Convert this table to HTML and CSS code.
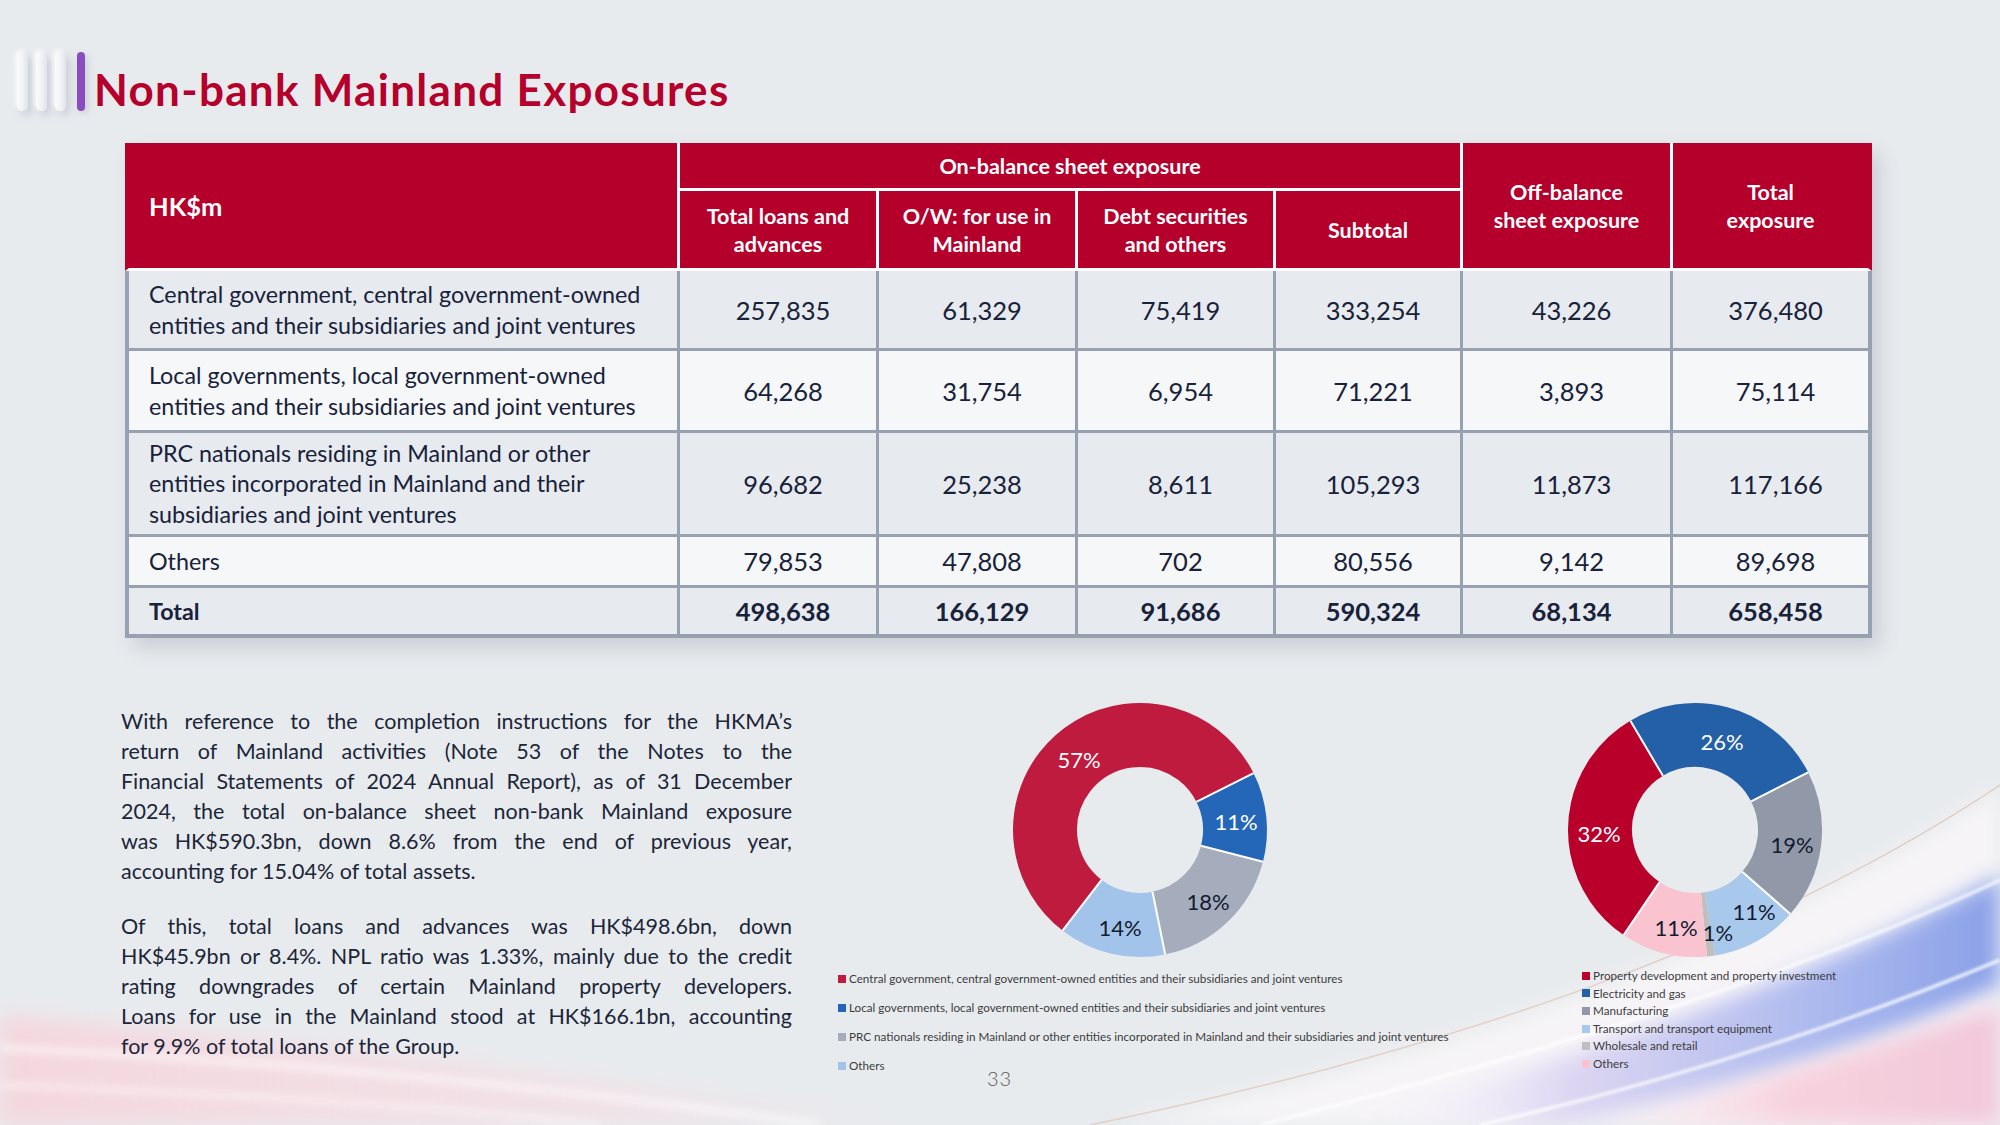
FILE: index.html
```html
<!DOCTYPE html>
<html lang="en">
<head>
<meta charset="utf-8">
<title>Non-bank Mainland Exposures</title>
<link rel="stylesheet" href="styles.css">
</head>
<body>
<div class="slide">
  <svg class="bg" viewBox="0 0 2000 1125" width="2000" height="1125" aria-hidden="true">
    <defs>
      <filter id="b10" x="-20%" y="-20%" width="140%" height="140%"><feGaussianBlur stdDeviation="10"/></filter>
      <filter id="b4" x="-20%" y="-20%" width="140%" height="140%"><feGaussianBlur stdDeviation="4"/></filter>
      <filter id="b2" x="-20%" y="-20%" width="140%" height="140%"><feGaussianBlur stdDeviation="1.5"/></filter>
      <linearGradient id="gBlue" x1="0" y1="0" x2="1" y2="0">
        <stop offset="0" stop-color="#ffffff" stop-opacity="0"/>
        <stop offset="0.35" stop-color="#dcd4f2"/>
        <stop offset="0.7" stop-color="#a9b6ee"/>
        <stop offset="1" stop-color="#7e98e6"/>
      </linearGradient>
      <linearGradient id="gPink" x1="0" y1="0" x2="1" y2="0">
        <stop offset="0" stop-color="#fbe3ea" stop-opacity="0"/>
        <stop offset="0.5" stop-color="#f7d2de"/>
        <stop offset="1" stop-color="#f1c8da"/>
      </linearGradient>
      <linearGradient id="gLeft" x1="0" y1="0" x2="1" y2="0">
        <stop offset="0" stop-color="#f6d4dc" stop-opacity="0.9"/>
        <stop offset="0.6" stop-color="#f6dbe2" stop-opacity="0.6"/>
        <stop offset="1" stop-color="#f6dbe2" stop-opacity="0"/>
      </linearGradient>
    </defs>
    <path d="M0,1015 C260,1035 560,1075 950,1125 L0,1125 Z" fill="url(#gLeft)" filter="url(#b10)"/>
    <path d="M0,1048 C300,1062 600,1092 820,1125" stroke="#ffffff" stroke-width="5" fill="none" opacity="0.8" filter="url(#b4)"/>
    <path d="M0,1085 C260,1095 480,1110 600,1125" stroke="#ffffff" stroke-width="4" fill="none" opacity="0.7" filter="url(#b4)"/>
    <path d="M1120,1125 C1450,1055 1760,950 2000,790 L2000,1125 Z" fill="#f6f4f7" filter="url(#b10)"/>
    <path d="M1330,1125 C1620,1050 1850,960 2000,875 L2000,985 C1860,1050 1690,1100 1560,1125 Z" fill="url(#gBlue)" opacity="0.9" filter="url(#b10)"/>
    <path d="M1580,1125 C1720,1095 1880,1045 2000,1005 L2000,1125 Z" fill="url(#gPink)" filter="url(#b10)"/>
    <path d="M1090,1125 C1450,1050 1760,945 2000,785" stroke="#e3cfc6" stroke-width="1.5" fill="none"/>
    <path d="M1260,1125 C1560,1050 1820,965 2000,880" stroke="#ffffff" stroke-width="3" fill="none" opacity="0.9" filter="url(#b2)"/>
    <path d="M1480,1125 C1700,1075 1880,1010 2000,960" stroke="#ffffff" stroke-width="3" fill="none" opacity="0.9" filter="url(#b2)"/>
  </svg>

  <div class="content">
    <header class="title-row">
      <div class="bars">
        <span class="bar"></span><span class="bar"></span><span class="bar"></span><span class="bar bar-accent"></span>
      </div>
      <h1 class="title">Non-bank Mainland Exposures</h1>
    </header>

    <table class="exposure">
      <colgroup>
        <col class="c-label"><col class="c-num"><col class="c-num"><col class="c-num3"><col class="c-sub"><col class="c-off"><col class="c-tot">
      </colgroup>
      <thead>
        <tr class="h1row">
          <th class="hk" rowspan="2">HK$m</th>
          <th class="grp" colspan="4">On-balance sheet exposure</th>
          <th rowspan="2">Off-balance<br>sheet exposure</th>
          <th class="last" rowspan="2">Total<br>exposure</th>
        </tr>
        <tr class="h2row">
          <th>Total loans and<br>advances</th>
          <th>O/W: for use in<br>Mainland</th>
          <th>Debt securities<br>and others</th>
          <th>Subtotal</th>
        </tr>
      </thead>
      <tbody>
        <tr class="r1 odd">
          <td class="lbl">Central government, central government-owned<br>entities and their subsidiaries and joint ventures</td>
          <td>257,835</td><td>61,329</td><td>75,419</td><td>333,254</td><td>43,226</td><td class="last">376,480</td>
        </tr>
        <tr class="r2 even">
          <td class="lbl">Local governments, local government-owned<br>entities and their subsidiaries and joint ventures</td>
          <td>64,268</td><td>31,754</td><td>6,954</td><td>71,221</td><td>3,893</td><td class="last">75,114</td>
        </tr>
        <tr class="r3 odd">
          <td class="lbl">PRC nationals residing in Mainland or other<br>entities incorporated in Mainland and their<br>subsidiaries and joint ventures</td>
          <td>96,682</td><td>25,238</td><td>8,611</td><td>105,293</td><td>11,873</td><td class="last">117,166</td>
        </tr>
        <tr class="r4 even">
          <td class="lbl">Others</td>
          <td>79,853</td><td>47,808</td><td>702</td><td>80,556</td><td>9,142</td><td class="last">89,698</td>
        </tr>
        <tr class="rt odd total">
          <td class="lbl">Total</td>
          <td>498,638</td><td>166,129</td><td>91,686</td><td>590,324</td><td>68,134</td><td class="last">658,458</td>
        </tr>
      </tbody>
    </table>

    <section class="lower">
      <div class="narrative">
        <p class="para">
          <span class="ln">With reference to the completion instructions for the HKMA’s</span>
          <span class="ln">return of Mainland activities (Note 53 of the Notes to the</span>
          <span class="ln">Financial Statements of 2024 Annual Report), as of 31 December</span>
          <span class="ln">2024, the total on-balance sheet non-bank Mainland exposure</span>
          <span class="ln">was HK$590.3bn, down 8.6% from the end of previous year,</span>
          <span class="ln end">accounting for 15.04% of total assets.</span>
        </p>
        <p class="para">
          <span class="ln">Of this, total loans and advances was HK$498.6bn, down</span>
          <span class="ln">HK$45.9bn or 8.4%. NPL ratio was 1.33%, mainly due to the credit</span>
          <span class="ln">rating downgrades of certain Mainland property developers.</span>
          <span class="ln">Loans for use in the Mainland stood at HK$166.1bn, accounting</span>
          <span class="ln end">for 9.9% of total loans of the Group.</span>
        </p>
      </div>

      <div class="chart chart-one">
        <svg class="donut" viewBox="0 0 260 260" width="260" height="260">
          <g fill="none" stroke-width="64">
            <circle cx="130" cy="130" r="95" stroke="#BE1B3F" stroke-dasharray="341.29 596.9" transform="rotate(127.6 130 130)"/>
            <circle cx="130" cy="130" r="95" stroke="#2467B8" stroke-dasharray="68.10 596.9" transform="rotate(-26.57 130 130)"/>
            <circle cx="130" cy="130" r="95" stroke="#A5ADBC" stroke-dasharray="106.21 596.9" transform="rotate(14.5 130 130)"/>
            <circle cx="130" cy="130" r="95" stroke="#A3C4EA" stroke-dasharray="81.31 596.9" transform="rotate(78.56 130 130)"/>
          </g>
          <g stroke="#ffffff" stroke-width="2">
            <line x1="91.56" y1="179.91" x2="52.52" y2="230.62"/>
            <line x1="186.35" y1="101.82" x2="243.59" y2="73.19"/>
            <line x1="190.99" y1="145.78" x2="252.95" y2="161.80"/>
            <line x1="142.49" y1="191.75" x2="155.18" y2="254.47"/>
          </g>
          <text class="pct light" x="69" y="59">57%</text>
          <text class="pct light" x="226" y="121">11%</text>
          <text class="pct dark" x="198" y="201">18%</text>
          <text class="pct dark" x="110" y="227">14%</text>
        </svg>
        <ul class="legend legend-one">
          <li><i class="sw" style="background:#BE1B3F"></i>Central government, central government-owned entities and their subsidiaries and joint ventures</li>
          <li><i class="sw" style="background:#2467B8"></i>Local governments, local government-owned entities and their subsidiaries and joint ventures</li>
          <li><i class="sw" style="background:#A5ADBC"></i>PRC nationals residing in Mainland or other entities incorporated in Mainland and their subsidiaries and joint ventures</li>
          <li><i class="sw" style="background:#A3C4EA"></i>Others</li>
        </ul>
      </div>

      <div class="chart chart-two">
        <svg class="donut" viewBox="0 0 260 260" width="260" height="260">
          <g fill="none" stroke-width="64">
            <circle cx="130" cy="130" r="95" stroke="#B8002B" stroke-dasharray="191.01 596.9" transform="rotate(124.2 130 130)"/>
            <circle cx="130" cy="130" r="95" stroke="#2460A7" stroke-dasharray="155.19 596.9" transform="rotate(239.4 130 130)"/>
            <circle cx="130" cy="130" r="95" stroke="#9198A7" stroke-dasharray="113.41 596.9" transform="rotate(-27 130 130)"/>
            <circle cx="130" cy="130" r="95" stroke="#A9C9EC" stroke-dasharray="65.66 596.9" transform="rotate(41.4 130 130)"/>
            <circle cx="130" cy="130" r="95" stroke="#BFBFBF" stroke-dasharray="5.97 596.9" transform="rotate(81 130 130)"/>
            <circle cx="130" cy="130" r="95" stroke="#F9C3D0" stroke-dasharray="65.66 596.9" transform="rotate(84.6 130 130)"/>
          </g>
          <g stroke="#ffffff" stroke-width="2">
            <line x1="94.59" y1="182.11" x2="58.61" y2="235.04"/>
            <line x1="97.93" y1="75.78" x2="65.36" y2="20.69"/>
            <line x1="186.13" y1="101.40" x2="243.16" y2="72.34"/>
            <line x1="177.26" y1="171.66" x2="225.26" y2="213.99"/>
          </g>
          <text class="pct light" x="157" y="41">26%</text>
          <text class="pct light" x="34" y="133">32%</text>
          <text class="pct dark" x="227" y="144">19%</text>
          <text class="pct dark" x="189" y="211">11%</text>
          <text class="pct dark" x="153" y="232">1%</text>
          <text class="pct dark" x="111" y="227">11%</text>
        </svg>
        <ul class="legend legend-two">
          <li><i class="sw" style="background:#B8002B"></i>Property development and property investment</li>
          <li><i class="sw" style="background:#2460A7"></i>Electricity and gas</li>
          <li><i class="sw" style="background:#9198A7"></i>Manufacturing</li>
          <li><i class="sw" style="background:#A9C9EC"></i>Transport and transport equipment</li>
          <li><i class="sw" style="background:#BFBFBF"></i>Wholesale and retail</li>
          <li><i class="sw" style="background:#F9C3D0"></i>Others</li>
        </ul>
      </div>
    </section>
  </div>

  <div class="page-no">33</div>
</div>
</body>
</html>
```

FILE: styles.css
```css
* { box-sizing: border-box; }

html, body {
  margin: 0;
  padding: 0;
}

body {
  width: 2000px;
  height: 1125px;
  overflow: hidden;
  background: #E8EBEE;
  font-family: "Lato", "Open Sans", "Liberation Sans", sans-serif;
  color: #1C2639;
}

.slide {
  position: relative;
  width: 2000px;
  height: 1125px;
  overflow: hidden;
  background: #E8EBEE;
}

.bg {
  position: absolute;
  left: 0;
  top: 0;
  z-index: 0;
}

.content {
  position: relative;
  z-index: 1;
  padding-top: 52px;
}

/* ---------- Title ---------- */
.title-row {
  display: flex;
  align-items: flex-start;
  padding-left: 17px;
  height: 63px;
}

.bars {
  display: flex;
  gap: 8px;
  height: 59px;
}

.bar {
  display: block;
  width: 11px;
  height: 59px;
  border-radius: 6px;
  background: linear-gradient(90deg, #fbfcfd 0%, #eef0f3 60%, #dfe3e8 100%);
  box-shadow: 4px 4px 8px rgba(120, 130, 150, 0.28), -2px -2px 4px rgba(255, 255, 255, 0.9);
}

.bar-accent {
  width: 8px;
  margin-left: 3px;
  background: #8A4CBF;
  box-shadow: 3px 3px 6px rgba(120, 130, 150, 0.25);
}

.title {
  margin: 11px 0 0 9px;
  font-size: 44px;
  letter-spacing: 1.3px;
  line-height: 52px;
  font-weight: 700;
  color: #B5002B;
  white-space: nowrap;
}

/* ---------- Table ---------- */
.exposure {
  margin: 28px 0 0 125px;
  width: 1747px;
  table-layout: fixed;
  border-collapse: separate;
  border-spacing: 0;
  box-shadow: 8px 10px 18px rgba(70, 80, 100, 0.18);
}

.c-label { width: 555px; }
.c-num { width: 199px; }
.c-num3 { width: 198px; }
.c-sub { width: 187px; }
.c-off { width: 210px; }
.c-tot { width: 199px; }

.exposure th {
  background: #B5002B;
  color: #ffffff;
  font-weight: 700;
  font-size: 21.5px;
  line-height: 28px;
  text-align: center;
  vertical-align: middle;
  padding: 0 4px;
  border-right: 3px solid #ffffff;
  border-bottom: 3px solid #ffffff;
  white-space: nowrap;
}

.exposure th.hk {
  text-align: left;
  font-size: 25.5px;
  padding-left: 20px;
  border-left: 4px solid #B5002B;
}

.exposure th.last {
  border-right: 4px solid #B5002B;
}

.h1row { height: 48px; }
.h2row { height: 80px; }

.exposure td {
  font-size: 25.5px;
  line-height: 30px;
  text-align: center;
  vertical-align: middle;
  color: #18223A;
  padding: 0 2px 0 12px;
  border-right: 3px solid #98A1AF;
  border-bottom: 3px solid #98A1AF;
}

.exposure td.lbl {
  text-align: left;
  font-size: 23.3px;
  line-height: 30.5px;
  padding: 0 6px 0 20px;
  border-left: 4px solid #98A1AF;
  white-space: nowrap;
}

.exposure td.last {
  border-right: 4px solid #98A1AF;
}

.odd td { background: #E7EAEE; }
.even td { background: #F6F7F9; }

.r1 { height: 80px; }
.r2 { height: 82px; }
.r3 { height: 104px; }
.r4 { height: 51px; }
.rt { height: 50px; }

.total td {
  font-weight: 700;
  border-bottom-width: 4px;
}

/* ---------- Lower section ---------- */
.lower {
  display: flex;
  align-items: flex-start;
  margin-top: 62px;
}

.narrative {
  margin: 6px 0 0 121px;
  width: 671px;
  flex: none;
}

.para {
  margin: 0 0 25px 0;
  font-size: 21.5px;
  line-height: 30px;
  color: #1C2639;
}

.ln {
  display: block;
  text-align: justify;
  text-align-last: justify;
}

.ln.end {
  text-align-last: left;
}

.chart {
  flex: none;
}

.chart-one {
  width: 727px;
  margin-left: 46px;
  padding-left: 172px;
}

.chart-two {
  width: 435px;
}

.donut {
  display: block;
}

.pct {
  font-family: "Lato", "Open Sans", sans-serif;
  font-size: 22px;
  text-anchor: middle;
  dominant-baseline: central;
}

.pct.light { fill: #ffffff; }
.pct.dark { fill: #111B30; }

.legend {
  list-style: none;
  margin: 0;
  padding: 0;
  font-size: 11.7px;
  color: #3C3C3C;
  white-space: nowrap;
}

.legend li {
  display: flex;
  align-items: center;
}

.sw {
  display: inline-block;
  width: 8px;
  height: 8px;
  margin-right: 3px;
  flex: none;
}

.legend-one {
  margin-left: -172px;
  margin-top: 4px;
  line-height: 29px;
}

.legend-two {
  margin-left: 17px;
  margin-top: 7px;
  line-height: 17.6px;
}

.page-no {
  position: absolute;
  left: 987px;
  top: 1066px;
  z-index: 2;
  font-size: 20px;
  font-weight: 300;
  color: #5A5A5A;
  letter-spacing: 1px;
}
```
